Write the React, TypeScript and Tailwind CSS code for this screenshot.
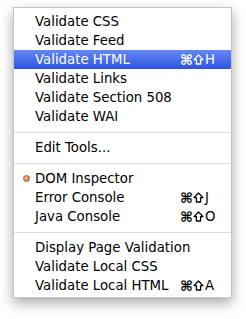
import React from 'react';

type Item =
  | { type: 'item'; label: string; key?: string; active?: boolean; dot?: boolean }
  | { type: 'sep' };

const items: Item[] = [
  { type: 'item', label: 'Validate CSS' },
  { type: 'item', label: 'Validate Feed' },
  { type: 'item', label: 'Validate HTML', key: 'H', active: true },
  { type: 'item', label: 'Validate Links' },
  { type: 'item', label: 'Validate Section 508' },
  { type: 'item', label: 'Validate WAI' },
  { type: 'sep' },
  { type: 'item', label: 'Edit Tools...' },
  { type: 'sep' },
  { type: 'item', label: 'DOM Inspector', dot: true },
  { type: 'item', label: 'Error Console', key: 'J' },
  { type: 'item', label: 'Java Console', key: 'O' },
  { type: 'sep' },
  { type: 'item', label: 'Display Page Validation' },
  { type: 'item', label: 'Validate Local CSS' },
  { type: 'item', label: 'Validate Local HTML', key: 'A' },
];

// outlined shift arrow
const ShiftIcon = () => (
  <svg width="11" height="11" viewBox="0 0 11 11" className="shrink-0">
    <path
      d="M5.5 1 L10 5.6 H7.6 V10 H3.4 V5.6 H1 Z"
      fill="none"
      stroke="currentColor"
      strokeWidth="1.3"
      strokeLinejoin="round"
    />
  </svg>
);

const Shortcut = ({ k }: { k: string }) => (
  <span className="flex items-center whitespace-nowrap">
    <span className="font-bold text-[14px] w-[13px]">⌘</span>
    <ShiftIcon />
    <span className="ml-[1px]">{k}</span>
  </span>
);

const App: React.FC = () => {
  return (
    <div className="min-h-screen bg-white pt-[7px] pl-[13px] font-['DejaVu_Sans',sans-serif] text-[13.3px]">
      <div className="w-[219px] bg-white border border-[#c4c4c4] pt-[4px] pb-[2px] shadow-[0_5px_12px_rgba(0,0,0,0.35)]">
        {items.map((it, i) => {
          if (it.type === 'sep') {
            return (
              <div key={i} className="h-[12px] flex items-center">
                <div className="h-px w-full bg-[#dcdcdc]" />
              </div>
            );
          }
          return (
            <div
              key={i}
              className={`h-[19px] grid grid-cols-[12px_1fr_51px] items-center pl-[9px] leading-none ${
                it.active ? 'bg-linear-to-b from-[#6787f3] to-[#2d53e2] text-white' : 'text-black'
              }`}
            >
              <div className="flex items-center">
                {it.dot && (
                  <span className="w-[7px] h-[7px] rounded-full bg-radial-[at_35%_35%] from-[#f7c28a] to-[#d9662a] border border-[#b85a2a]" />
                )}
              </div>
              <span className="whitespace-nowrap">{it.label}</span>
              {it.key ? <Shortcut k={it.key} /> : <span />}
            </div>
          );
        })}
      </div>
    </div>
  );
};

export default App;
